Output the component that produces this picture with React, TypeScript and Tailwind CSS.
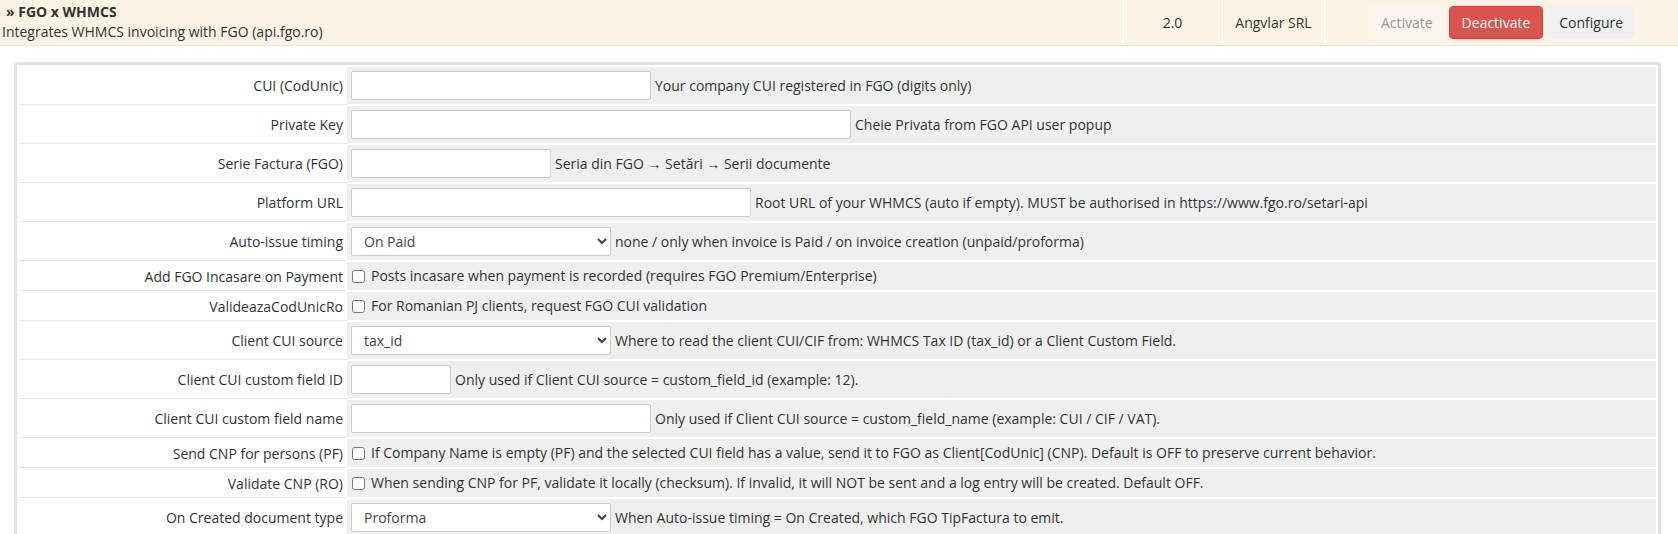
import React from 'react';

type Row =
  | { label: string; kind: 'text'; width: string; help: string }
  | { label: string; kind: 'select'; value: string; help: string }
  | { label: string; kind: 'check'; help: string };

const rows: Row[] = [
  { label: 'CUI (CodUnic)', kind: 'text', width: 'w-[300px]', help: 'Your company CUI registered in FGO (digits only)' },
  { label: 'Private Key', kind: 'text', width: 'w-[500px]', help: 'Cheie Privata from FGO API user popup' },
  { label: 'Serie Factura (FGO)', kind: 'text', width: 'w-[200px]', help: 'Seria din FGO → Setări → Serii documente' },
  {
    label: 'Platform URL',
    kind: 'text',
    width: 'w-[400px]',
    help: 'Root URL of your WHMCS (auto if empty). MUST be authorised in https://www.fgo.ro/setari-api',
  },
  {
    label: 'Auto-issue timing',
    kind: 'select',
    value: 'On Paid',
    help: 'none / only when invoice is Paid / on invoice creation (unpaid/proforma)',
  },
  { label: 'Add FGO Incasare on Payment', kind: 'check', help: 'Posts incasare when payment is recorded (requires FGO Premium/Enterprise)' },
  { label: 'ValideazaCodUnicRo', kind: 'check', help: 'For Romanian PJ clients, request FGO CUI validation' },
  {
    label: 'Client CUI source',
    kind: 'select',
    value: 'tax_id',
    help: 'Where to read the client CUI/CIF from: WHMCS Tax ID (tax_id) or a Client Custom Field.',
  },
  {
    label: 'Client CUI custom field ID',
    kind: 'text',
    width: 'w-[100px]',
    help: 'Only used if Client CUI source = custom_field_id (example: 12).',
  },
  {
    label: 'Client CUI custom field name',
    kind: 'text',
    width: 'w-[300px]',
    help: 'Only used if Client CUI source = custom_field_name (example: CUI / CIF / VAT).',
  },
  {
    label: 'Send CNP for persons (PF)',
    kind: 'check',
    help: 'If Company Name is empty (PF) and the selected CUI field has a value, send it to FGO as Client[CodUnic] (CNP). Default is OFF to preserve current behavior.',
  },
  {
    label: 'Validate CNP (RO)',
    kind: 'check',
    help: 'When sending CNP for PF, validate it locally (checksum). If invalid, it will NOT be sent and a log entry will be created. Default OFF.',
  },
  {
    label: 'On Created document type',
    kind: 'select',
    value: 'Proforma',
    help: 'When Auto-issue timing = On Created, which FGO TipFactura to emit.',
  },
];

const Field: React.FC<{ row: Row }> = ({ row }) => {
  if (row.kind === 'check') {
    return (
      <div className="flex items-center py-[4px] leading-5">
        <input type="checkbox" className="w-[13px] h-[13px] ml-[1px] mr-[6px]" />
        <span>{row.help}</span>
      </div>
    );
  }
  return (
    <div className="flex items-center py-[4px]">
      {row.kind === 'text' ? (
        <input
          type="text"
          className={`${row.width} h-[29px] bg-white border border-[#cccccc] rounded-[2px] px-2 outline-none`}
        />
      ) : (
        <select
          defaultValue={row.value}
          className="w-[260px] h-[29px] bg-white border border-[#cccccc] rounded-[2px] pl-[8px] pr-1 text-[14px] text-[#444]"
        >
          <option>{row.value}</option>
        </select>
      )}
      <span className="ml-[4px] leading-5">{row.help}</span>
    </div>
  );
};

export default function App() {
  return (
    <div className="w-[1678px] min-h-[534px] bg-white text-[14px] text-[#333] font-['Open_Sans',sans-serif]">
      {/* module header row */}
      <div className="flex gap-[2px] bg-white border-b border-[#ece6dc]">
        <div className="flex-1 bg-[#fcf3e5] pl-[2px] pt-[2px] pb-[3px] leading-5">
          <div className="font-bold pl-[4px]">» FGO x WHMCS</div>
          <div>Integrates WHMCS invoicing with FGO (api.fgo.ro)</div>
        </div>
        <div className="w-[97px] bg-[#fcf3e5] flex items-center justify-center">2.0</div>
        <div className="w-[101px] bg-[#fcf3e5] flex items-center justify-center">Angvlar SRL</div>
        <div className="w-[352px] bg-[#fcf3e5] flex items-center justify-center gap-[4px]">
          <span className="h-[33px] px-3 flex items-center rounded-[4px] bg-[#faf5ee] text-[#999]">Activate</span>
          <span className="h-[33px] px-3 flex items-center rounded-[4px] bg-[#d9534f] border border-[#d43f3a] text-white">
            Deactivate
          </span>
          <span className="h-[33px] px-3 flex items-center rounded-[4px] bg-[#f0f0f0] text-[#333]">Configure</span>
        </div>
      </div>

      {/* settings form */}
      <div className="mt-[16px] ml-[14px] mr-[17px] border-[3px] border-[#dfe3e8] rounded-[4px] p-[2px] bg-white flex flex-col gap-[2px]">
        {rows.map((row) => (
          <div key={row.label} className="flex">
            <div className="w-[328px] shrink-0 bg-white flex items-center justify-end pr-[4px] text-right shadow-[0_1px_0_#e6e6e6]">
              {row.label}
            </div>
            <div className="flex-1 bg-[#efefef] pl-[4px]">
              <Field row={row} />
            </div>
          </div>
        ))}
      </div>
    </div>
  );
}
